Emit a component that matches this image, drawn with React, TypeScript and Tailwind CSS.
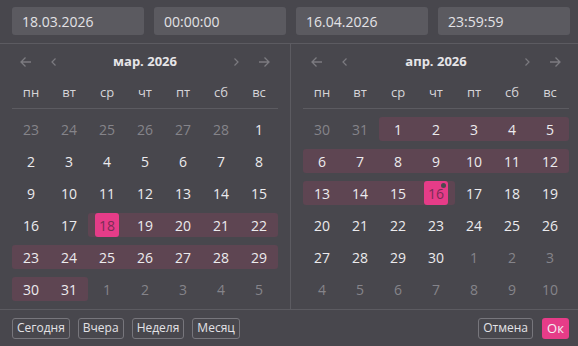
import React from "react";

type Cell = { d: number; muted?: boolean; range?: boolean; sel?: boolean; dot?: boolean };

const weekdays = ["пн", "вт", "ср", "чт", "пт", "сб", "вс"];

// March 2026, range starts at 18
function marchCells(): Cell[] {
  const out: Cell[] = [];
  [23, 24, 25, 26, 27, 28].forEach((d) => out.push({ d, muted: true }));
  for (let d = 1; d <= 31; d++) out.push({ d, range: d >= 18, sel: d === 18 });
  [1, 2, 3, 4, 5].forEach((d) => out.push({ d, muted: true }));
  return out;
}

// April 2026, range ends at 16
function aprilCells(): Cell[] {
  const out: Cell[] = [];
  [30, 31].forEach((d) => out.push({ d, muted: true }));
  for (let d = 1; d <= 30; d++) out.push({ d, range: d <= 16, sel: d === 16, dot: d === 16 });
  [1, 2, 3, 4, 5, 6, 7, 8, 9, 10].forEach((d) => out.push({ d, muted: true }));
  return out;
}

function Arrow({ dir }: { dir: "left" | "right" }) {
  return (
    <svg width="14" height="14" viewBox="0 0 14 14" fill="none" stroke="#7c7b80" strokeWidth="1.3">
      {dir === "left" ? (
        <path d="M12 7H2M6.5 2.5L2 7l4.5 4.5" />
      ) : (
        <path d="M2 7h10M7.5 2.5L12 7l-4.5 4.5" />
      )}
    </svg>
  );
}

function Chevron({ dir }: { dir: "left" | "right" }) {
  return (
    <svg width="10" height="12" viewBox="0 0 10 12" fill="none" stroke="#7c7b80" strokeWidth="1.2">
      {dir === "left" ? <path d="M6.5 2.5L3 6l3.5 3.5" /> : <path d="M3.5 2.5L7 6l-3.5 3.5" />}
    </svg>
  );
}

function Calendar({ title, cells }: { title: string; cells: Cell[] }) {
  const rows: Cell[][] = [];
  for (let i = 0; i < 6; i++) rows.push(cells.slice(i * 7, i * 7 + 7));
  return (
    <div className="w-[266px]">
      <div className="h-[36px] flex items-center">
        <div className="w-[28px] flex justify-center"><Arrow dir="left" /></div>
        <div className="w-[28px] flex justify-center"><Chevron dir="left" /></div>
        <div className="flex-1 text-center text-[13px] font-bold text-[#e6e5e8]">{title}</div>
        <div className="w-[28px] flex justify-center"><Chevron dir="right" /></div>
        <div className="w-[28px] flex justify-center"><Arrow dir="right" /></div>
      </div>
      <div className="h-[29px] grid grid-cols-7 items-center border-b border-[#5c5b61] text-[13px] text-[#d6d5d9]">
        {weekdays.map((w) => (
          <div key={w} className="text-center pb-[2px]">{w}</div>
        ))}
      </div>
      <div className="pt-2 flex flex-col gap-2">
        {rows.map((row, ri) => (
          <div key={ri} className="grid grid-cols-7 h-[24px]">
            {row.map((c, ci) => {
              const prev = row[ci - 1];
              const next = row[ci + 1];
              const first = !prev || !prev.range;
              const last = !next || !next.range;
              return (
                <div
                  key={ci}
                  className={
                    "relative flex items-center justify-center " +
                    (c.range ? "bg-[#5e4552] " : "") +
                    (c.range && first ? "rounded-l-[3px] " : "") +
                    (c.range && last ? "rounded-r-[3px] " : "")
                  }
                >
                  {c.sel ? (
                    <div className="relative w-[24px] h-[24px] rounded-[3px] bg-[#e63c88] flex items-center justify-center text-[14px] text-[#7a2c55]">
                      {c.d}
                      {c.dot && <span className="absolute top-[2px] right-[2px] w-[5px] h-[5px] rounded-full bg-[#4a494f]" />}
                    </div>
                  ) : (
                    <span className={"text-[14px] " + (c.muted ? "text-[#85848a]" : "text-[#ecebee]")}>{c.d}</span>
                  )}
                </div>
              );
            })}
          </div>
        ))}
      </div>
    </div>
  );
}

function Field({ value }: { value: string }) {
  return (
    <div className="h-[28px] rounded-[3px] bg-[#5b5a60] flex items-center px-[10px] text-[14px] text-[#e3e2e6]">
      {value}
    </div>
  );
}

function Btn({ label }: { label: string }) {
  return (
    <button className="h-[21px] px-[4px] rounded-[3px] border border-[#77767c] text-[12px] text-[#e3e2e6] leading-none">
      {label}
    </button>
  );
}

export default function App() {
  return (
    <div
      className="w-[578px] h-[346px] bg-[#48474d] overflow-hidden"
      style={{ fontFamily: '"Open Sans", "Noto Sans", sans-serif' }}
    >
      {/* inputs */}
      <div className="h-[44px] border-b border-[#5c5b61] grid grid-cols-4 items-start gap-[10px] pl-3 pr-2 pt-[7px]">
        <Field value="18.03.2026" />
        <Field value="00:00:00" />
        <Field value="16.04.2026" />
        <Field value="23:59:59" />
      </div>
      {/* calendars */}
      <div className="flex h-[266px] border-b border-[#5c5b61]">
        <div className="w-[291px] px-3 border-r border-[#5c5b61] shrink-0">
          <Calendar title="мар. 2026" cells={marchCells()} />
        </div>
        <div className="pl-3">
          <Calendar title="апр. 2026" cells={aprilCells()} />
        </div>
      </div>
      {/* footer */}
      <div className="flex items-center h-[36px] pl-3 pr-[9px]">
        <div className="flex gap-2">
          <Btn label="Сегодня" />
          <Btn label="Вчера" />
          <Btn label="Неделя" />
          <Btn label="Месяц" />
        </div>
        <div className="ml-auto flex gap-[9px]">
          <Btn label="Отмена" />
          <button className="h-[21px] w-[27px] rounded-[3px] bg-[#e63c88] text-[13px] text-[#f3f2f4] leading-none">
            Ок
          </button>
        </div>
      </div>
    </div>
  );
}
